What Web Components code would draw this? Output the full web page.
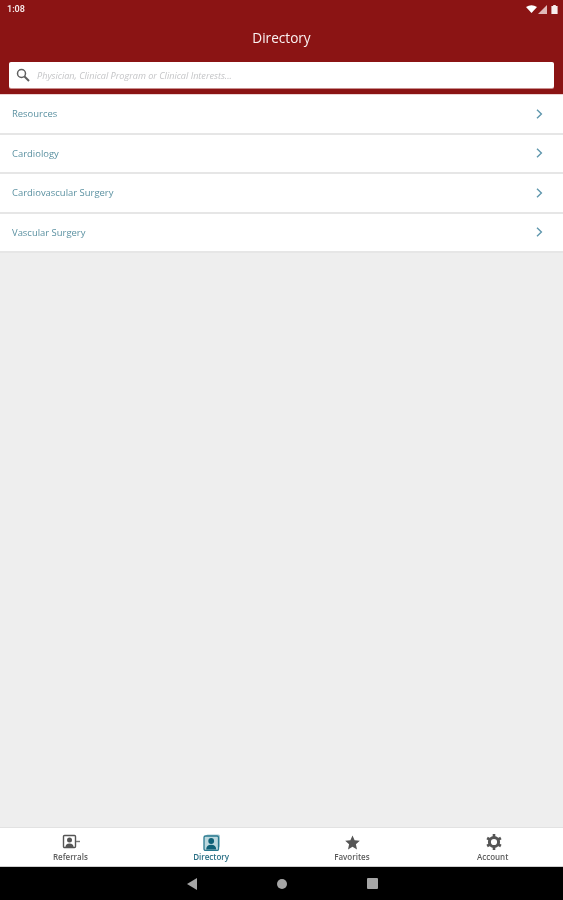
<!DOCTYPE html>
<html>
<head>
<meta charset="utf-8">
<title>Directory</title>
<style>
  html, body { margin: 0; height: 100%; background: #eeeeee; }
  body { font-family: "Open Sans", "Liberation Sans", sans-serif; }
  /* the reference is a soft, upscaled capture */
  #app { display: flex; flex-direction: column; height: 900px; overflow: hidden; filter: blur(0.35px); }
</style>
</head>
<body>
<div id="app">
  <app-header heading="Directory" placeholder="Physician, Clinical Program or Clinical Interests..." time="1:08"></app-header>
  <dir-list>
    <dir-row>Resources</dir-row>
    <dir-row>Cardiology</dir-row>
    <dir-row>Cardiovascular Surgery</dir-row>
    <dir-row>Vascular Surgery</dir-row>
  </dir-list>
  <tab-bar>
    <tab-item label="Referrals" icon="referrals"></tab-item>
    <tab-item label="Directory" icon="directory" active></tab-item>
    <tab-item label="Favorites" icon="star"></tab-item>
    <tab-item label="Account" icon="gear"></tab-item>
  </tab-bar>
  <nav-bar></nav-bar>
</div>

<script>
class AppHeader extends HTMLElement {
  constructor() {
    super();
    this.attachShadow({ mode: 'open' });
  }

  connectedCallback() {
    const heading = this.getAttribute('heading') || '';
    const placeholder = this.getAttribute('placeholder') || '';
    const time = this.getAttribute('time') || '';

    this.shadowRoot.innerHTML = `
      <style>
        :host { display: block; background: #8b1414; height: 95px; flex: none; box-sizing: border-box; border-bottom: 1px solid #ecd2d2; }
        .status { display: flex; justify-content: space-between; align-items: center; height: 18px; padding: 0 5px 0 7px; color: #f6e9e9; font: 600 9px "Roboto", sans-serif; }
        .status-icons { display: flex; align-items: center; }
        .signal { margin: 0 4px 0 1px; }
        h1 { margin: 0; height: 44px; display: flex; align-items: center; justify-content: center; padding-bottom: 5px; box-sizing: border-box; color: #fbf3f3; font: 400 13.6px "Open Sans", sans-serif; }
        .search { margin: 0 9px; height: 26px; background: #fff; border-radius: 2px; display: flex; align-items: center; gap: 7px; padding-left: 7px; box-shadow: 0 1px 0 #c98f8f; }
        .placeholder { color: #c4c5c7; font: italic 400 9.1px "Open Sans", sans-serif; white-space: nowrap; }
        svg { display: block; }
      </style>
      <div class="status">
        <span>${time}</span>
        <span class="status-icons">
          <svg width="11" height="8" viewBox="0 0 11 8"><path d="M0 2 Q5.5 -1.6 11 2 L5.5 8 Z" fill="#fff"/></svg>
          <svg class="signal" width="9" height="9" viewBox="0 0 9 9"><path d="M9 0 V9 H0 Z" fill="#e0b9b9"/></svg>
          <svg width="7" height="9" viewBox="0 0 7 9"><path d="M2.2 0 H4.8 V1 H6.6 V9 H.4 V1 H2.2 Z" fill="#f7eeee"/></svg>
        </span>
      </div>
      <h1>${heading}</h1>
      <div class="search">
        <svg width="14" height="14" viewBox="0 0 14 14" fill="none" stroke="#5f5f5f"><circle cx="5.5" cy="5.5" r="4" stroke-width="1.5"/><path d="M8.5 8.5 L13 13" stroke-width="2"/></svg>
        <span class="placeholder">${placeholder}</span>
      </div>
    `;
  }
}

class DirList extends HTMLElement {
  constructor() {
    super();
    this.attachShadow({ mode: 'open' });
    this.shadowRoot.innerHTML = `
      <style>
        :host { display: flex; flex-direction: column; flex: 1; background: #eeeeee; }
      </style>
      <slot></slot>
    `;
  }
}

class DirRow extends HTMLElement {
  constructor() {
    super();
    this.attachShadow({ mode: 'open' });
    this.shadowRoot.innerHTML = `
      <style>
        :host { display: flex; align-items: center; justify-content: space-between; flex: none; box-sizing: border-box; height: 39.5px; padding: 0 20px 0 12px; background: #fff; border-bottom: 2px solid #e6e6e6; color: #5b91a1; font: 400 9.45px "Open Sans", sans-serif; }
        svg { display: block; }
      </style>
      <slot></slot>
      <svg width="7" height="10" viewBox="0 0 7 10" fill="none" stroke="#5f97ad" stroke-width="1.4"><path d="M1 .8 L5.4 5 L1 9.2"/></svg>
    `;
  }
}

const TAB_ICONS = {
  referrals: `<svg width="20" height="16" viewBox="0 0 20 16"><rect x="2.5" y="1.5" width="12" height="12" rx="1" fill="none" stroke="#555" stroke-width="1.4"/><circle cx="8.5" cy="6" r="2.5" fill="#555"/><path d="M4.5 13 Q4.5 9.5 8.5 9.5 Q12.5 9.5 12.5 13 Z" fill="#555"/><path d="M15 7.5 H19" stroke="#777" stroke-width="1.4"/></svg>`,
  directory: `<svg width="18" height="17" viewBox="0 0 18 17"><rect x="3" y=".5" width="14" height="13" rx="1.5" fill="#a9cbd3"/><rect x="1" y="2" width="14.5" height="14.5" rx="1.5" fill="#bcd8de" stroke="#2a7a90" stroke-width="1.3"/><circle cx="8.2" cy="7" r="2.9" fill="#0f6177"/><path d="M3.2 15.5 Q3.2 10.7 8.2 10.7 Q13.2 10.7 13.2 15.5 Z" fill="#0f6177"/></svg>`,
  star: `<svg width="15" height="15" viewBox="0 0 15 15"><path d="M7.5 .5 L9.6 5.3 L14.8 5.8 L10.9 9.3 L12 14.4 L7.5 11.8 L3 14.4 L4.1 9.3 L.2 5.8 L5.4 5.3 Z" fill="#555"/></svg>`,
  gear: `<svg width="16" height="16" viewBox="0 0 16 16"><circle cx="8" cy="8" r="4.6" fill="none" stroke="#555" stroke-width="3"/><g stroke="#555" stroke-width="2.6"><path d="M8 0 V3"/><path d="M8 13 V16"/><path d="M1.1 4 L3.7 5.5"/><path d="M12.3 10.5 L14.9 12"/><path d="M1.1 12 L3.7 10.5"/><path d="M12.3 5.5 L14.9 4"/></g></svg>`
};

class TabBar extends HTMLElement {
  constructor() {
    super();
    this.attachShadow({ mode: 'open' });
    this.shadowRoot.innerHTML = `
      <style>
        :host { display: grid; grid-template-columns: repeat(4, 1fr); flex: none; box-sizing: border-box; height: 40px; background: #fff; border-top: 1px solid #e2e2e2; border-bottom: 1px solid #cfcfcf; }
      </style>
      <slot></slot>
    `;
  }
}

class TabItem extends HTMLElement {
  constructor() {
    super();
    this.attachShadow({ mode: 'open' });
  }

  connectedCallback() {
    const label = this.getAttribute('label') || '';
    const icon = TAB_ICONS[this.getAttribute('icon')] || '';
    const color = this.hasAttribute('active') ? '#2a6f85' : '#5c5c5c';

    this.shadowRoot.innerHTML = `
      <style>
        :host { display: flex; flex-direction: column; align-items: center; }
        .icon { height: 16px; margin-top: 6px; padding-left: 2px; display: flex; align-items: center; justify-content: center; }
        .label { margin-top: 1px; color: ${color}; font: 600 8px/11px "Open Sans", sans-serif; }
        svg { display: block; }
      </style>
      <div class="icon">${icon}</div>
      <div class="label">${label}</div>
    `;
  }
}

class NavBar extends HTMLElement {
  constructor() {
    super();
    this.attachShadow({ mode: 'open' });
    this.shadowRoot.innerHTML = `
      <style>
        :host { display: grid; grid-template-columns: 10px 10px 10px; justify-content: center; column-gap: 80px; align-items: center; flex: none; height: 33px; background: #000; }
        svg { display: block; }
      </style>
      <svg width="10" height="12" viewBox="0 0 10 12"><path d="M10 0 V12 L0 6 Z" fill="#a6a6a6"/></svg>
      <svg width="10" height="10" viewBox="0 0 10 10"><circle cx="5" cy="5" r="5" fill="#a6a6a6"/></svg>
      <svg width="11" height="11" viewBox="0 0 11 11"><rect width="11" height="11" rx="1" fill="#a6a6a6"/></svg>
    `;
  }
}

customElements.define('app-header', AppHeader);
customElements.define('dir-list', DirList);
customElements.define('dir-row', DirRow);
customElements.define('tab-bar', TabBar);
customElements.define('tab-item', TabItem);
customElements.define('nav-bar', NavBar);
</script>
</body>
</html>
